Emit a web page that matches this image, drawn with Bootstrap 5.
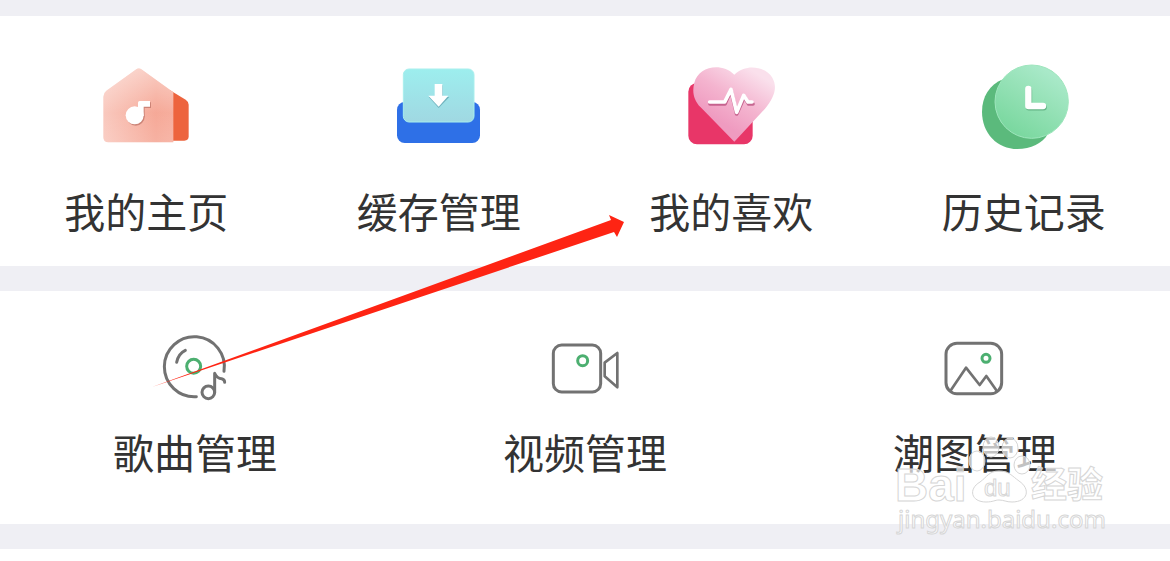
<!DOCTYPE html>
<html lang="zh-CN">
<head>
<meta charset="utf-8">
<meta name="viewport" content="width=device-width, initial-scale=1">
<title>我的音乐</title>
<link href="https://cdn.jsdelivr.net/npm/bootstrap@5.3.0/dist/css/bootstrap.min.css" rel="stylesheet">
<style>
body { background: #fff; font-family: "Noto Sans CJK SC", sans-serif; }
.stage { background: #efeff4; padding-top: 16px; }
.panel-top { padding: 34px 0 32px; }
.panel-tools { padding: 29px 0 49px; margin-top: 25px; }
.panel-next { height: 12px; margin-top: 25px; }
.tile { color: #333; font-size: 41px; line-height: 48px; }
.panel-top .tile { gap: 26px; }
.panel-tools .tile { gap: 17px; }
.tile svg { flex: none; }
.line-art { fill: none; stroke: #727272; stroke-width: 9; stroke-linecap: round; stroke-linejoin: round; }
.pointer { left: 0; top: 0; pointer-events: none; }
.watermark { right: 60px; bottom: 18px; pointer-events: none; fill: #fff; fill-opacity: .7; stroke: #d6d6d6; stroke-width: 1; }
.watermark text { font-family: "Liberation Sans", "Noto Sans CJK SC", sans-serif; }
.watermark .site { font-family: "Noto Sans", sans-serif; }
</style>
</head>
<body>
<main class="stage position-relative">
  <nav class="panel-top bg-white" aria-label="我的">
    <div class="row g-0">
      <div class="col-3">
        <a href="#home" class="tile d-flex flex-column align-items-center text-decoration-none text-nowrap">
          <svg width="130" height="110" viewBox="4 0 390 330" aria-hidden="true">
            <defs>
              <linearGradient id="house" x1="0" y1="0" x2="1" y2="0"><stop offset="0" stop-color="#f9c6bb"/><stop offset=".75" stop-color="#f5a492"/><stop offset="1" stop-color="#f6aa99"/></linearGradient>
              <linearGradient id="houseTop" x1="0" y1="0" x2="0" y2="1"><stop offset="0" stop-color="#fff" stop-opacity=".45"/><stop offset=".6" stop-color="#fff" stop-opacity=".05"/><stop offset="1" stop-color="#fff" stop-opacity=".15"/></linearGradient>
            </defs>
            <path d="M270 120L318 149Q327 155 327 164V259Q327 272 314 272H270Z" fill="#ed643e"/>
            <path d="M168 59Q177 52 187 59L281 127V277H86Q71 277 71 262V140Q71 129 80 122Z" fill="url(#house)"/>
            <path d="M168 59Q177 52 187 59L281 127V277H86Q71 277 71 262V140Q71 129 80 122Z" fill="url(#houseTop)"/>
            <g fill="#b76c60" opacity=".65" transform="translate(3 4)"><circle cx="165" cy="196" r="27"/><path d="M175 153H211V170H192V198H175Z"/></g>
            <g fill="#fff"><circle cx="165" cy="196" r="27"/><path d="M175 158Q175 153 180 153H211V170H192V198H175Z"/></g>
          </svg>
          <span>我的主页</span>
        </a>
      </div>
      <div class="col-3">
        <a href="#cache" class="tile d-flex flex-column align-items-center text-decoration-none text-nowrap">
          <svg width="130" height="110" viewBox="-4 0 390 330" aria-hidden="true">
            <defs><linearGradient id="tray" x1="0" y1="0" x2="0" y2="1"><stop offset="0" stop-color="#9deeee"/><stop offset="1" stop-color="#a0d8e2"/></linearGradient></defs>
            <rect x="65" y="156" width="249" height="123" rx="23" fill="#2e70e7"/>
            <rect x="84" y="57" width="212" height="159" rx="17" fill="url(#tray)" stroke="#a9efed" stroke-width="3"/>
            <path d="M179 106H202V141H222L190 174L160 141H179Z" fill="#5b9fac" opacity=".7"/>
            <path d="M178 102H201V137H219L190 170L159 137H178Z" fill="#fff"/>
          </svg>
          <span>缓存管理</span>
        </a>
      </div>
      <div class="col-3">
        <a href="#likes" class="tile d-flex flex-column align-items-center text-decoration-none text-nowrap">
          <svg width="130" height="110" viewBox="4 0 390 330" aria-hidden="true">
            <defs><linearGradient id="heart" x1=".35" y1=".75" x2=".8" y2=".1"><stop offset="0" stop-color="#ef9bc0"/><stop offset=".45" stop-color="#f4b4cf"/><stop offset="1" stop-color="#fae0ec"/></linearGradient></defs>
            <rect x="71" y="99" width="193" height="184" rx="26" fill="#e83668"/>
            <path d="M209 275L108 172C86 149 82 124 89 98C101 50 169 35 209 74C244 39 304 50 323 83C340 113 328 143 301 176Z" fill="url(#heart)"/>
            <path d="M136 162H181L199 121L216 192L239 141L252 162H265" fill="none" stroke="#b74b7b" stroke-width="11" stroke-linejoin="round" stroke-linecap="round" opacity=".75"/>
            <path d="M135 156H180L199 118L216 187L237 136L250 156H262" fill="none" stroke="#fff" stroke-width="11" stroke-linejoin="round" stroke-linecap="round"/>
          </svg>
          <span>我的喜欢</span>
        </a>
      </div>
      <div class="col-3">
        <a href="#history" class="tile d-flex flex-column align-items-center text-decoration-none text-nowrap">
          <svg width="130" height="110" viewBox="-4 0 390 330" aria-hidden="true">
            <defs><linearGradient id="clock" x1=".25" y1=".9" x2=".75" y2=".1"><stop offset="0" stop-color="#7bd8a0"/><stop offset=".6" stop-color="#97e2b8"/><stop offset="1" stop-color="#a9e9c9"/></linearGradient></defs>
            <path d="M128 88C87 103 65 142 65 185C65 250 111 297 171 297C211 297 247 280 263 251Z" fill="#5bba7c"/>
            <circle cx="214" cy="155" r="110" fill="url(#clock)" stroke="#9ee6bd" stroke-width="3"/>
            <path d="M206 121V172H250" fill="none" stroke="#489a69" stroke-width="19" stroke-linecap="round" stroke-linejoin="round" opacity=".6"/>
            <path d="M204 117V168H248" fill="none" stroke="#fff" stroke-width="19" stroke-linecap="round" stroke-linejoin="round"/>
          </svg>
          <span>历史记录</span>
        </a>
      </div>
    </div>
  </nav>

  <nav class="panel-tools bg-white" aria-label="管理">
    <div class="row g-0">
      <div class="col-4">
        <a href="#songs" class="tile d-flex flex-column align-items-center text-decoration-none text-nowrap">
          <svg class="line-art" width="110" height="90" viewBox="0 0 330 270" aria-hidden="true">
            <path d="M169 230A90 90 0 1 1 252 154"/>
            <path d="M110 127Q115 101 136 91"/>
            <circle cx="161" cy="139" r="21" stroke="#4caf70"/>
            <circle cx="205" cy="217" r="19"/>
            <path d="M224 217V160Q232 176 245 176Q254 178 254 187"/>
          </svg>
          <span>歌曲管理</span>
        </a>
      </div>
      <div class="col-4">
        <a href="#videos" class="tile d-flex flex-column align-items-center text-decoration-none text-nowrap">
          <svg class="line-art" width="110" height="90" viewBox="-15 -15 330 270" aria-hidden="true">
            <rect x="55" y="60" width="142" height="141" rx="25"/>
            <circle cx="143" cy="107" r="15" stroke="#4caf70"/>
            <path d="M209 113L247 84V187L209 154Z" stroke-width="8"/>
          </svg>
          <span>视频管理</span>
        </a>
      </div>
      <div class="col-4">
        <a href="#pictures" class="tile d-flex flex-column align-items-center text-decoration-none text-nowrap">
          <svg class="line-art" width="110" height="90" viewBox="-15 -15 330 270" aria-hidden="true">
            <rect x="63" y="55" width="167" height="151" rx="33"/>
            <circle cx="183" cy="100" r="12" stroke="#4caf70"/>
            <path d="M78 195L123 128L164 180L184 153L214 196" stroke-width="8"/>
          </svg>
          <span>潮图管理</span>
        </a>
      </div>
    </div>
  </nav>

  <div class="panel-next bg-white"></div>

  <svg class="pointer position-absolute w-100" viewBox="0 0 1170 561" aria-hidden="true">
    <path d="M152 387L611 220L609 215L624 222L617 237L614 232Z" fill="#fe2413"/>
  </svg>

  <svg class="watermark position-absolute" width="220" height="110" viewBox="890 433 220 110" role="img" aria-label="Baidu 经验">
    <ellipse cx="977" cy="461" rx="8" ry="10"/>
    <ellipse cx="991" cy="447" rx="8" ry="10"/>
    <ellipse cx="1010" cy="448" rx="8" ry="10"/>
    <ellipse cx="1022" cy="465" rx="8" ry="9"/>
    <path d="M999 471C989 471 987 477 980 482C968 489 971 502 986 502C993 502 995 500 999 500C1004 500 1006 502 1012 502C1028 502 1031 489 1019 481C1012 476 1009 471 999 471Z"/>
    <text x="895" y="501" font-size="46" font-weight="700">Bai</text>
    <text x="984" y="496" font-size="24">du</text>
    <text x="1031" y="498" font-size="36" font-weight="700">经验</text>
    <text class="site" x="898" y="528" font-size="24">jingyan.baidu.com</text>
  </svg>
</main>
<script src="https://cdn.jsdelivr.net/npm/bootstrap@5.3.0/dist/js/bootstrap.bundle.min.js"></script>
</body>
</html>
